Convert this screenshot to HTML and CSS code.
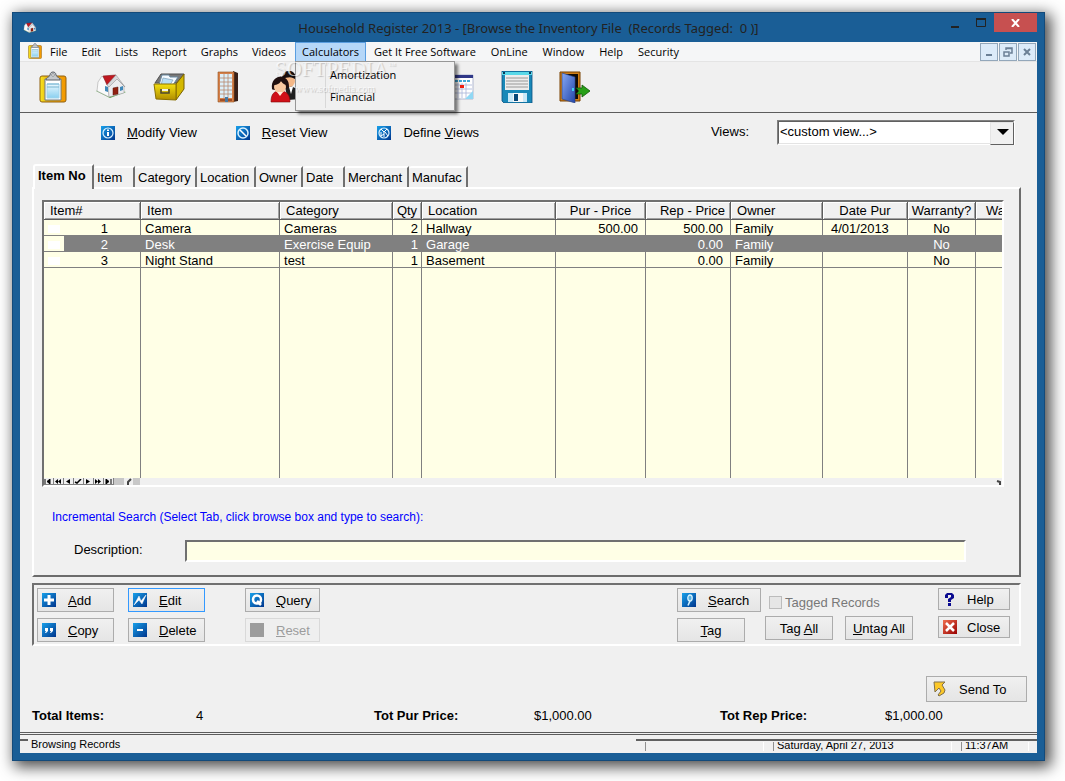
FILE: index.html
```html
<!DOCTYPE html>
<html lang="en">
<head>
    <meta charset="UTF-8">
    <meta name="viewport" content="width=device-width, initial-scale=1.0">
    <title>Household Register 2013</title>
    <link rel="stylesheet" href="styles.css">
</head>
<body>
    <!-- Shared icon drawings -->
    <svg class="defs" width="0" height="0" aria-hidden="true">
        <defs>
            <linearGradient id="blue" x1="0" y1="0" x2="1" y2="1">
                <stop offset="0" stop-color="#18a0ea"/>
                <stop offset="1" stop-color="#00358c"/>
            </linearGradient>
            <linearGradient id="red" x1="0" y1="0" x2="1" y2="1">
                <stop offset="0" stop-color="#f07050"/>
                <stop offset="1" stop-color="#980000"/>
            </linearGradient>
            <linearGradient id="gold" x1="0" y1="0" x2="0" y2="1">
                <stop offset="0" stop-color="#f4e010"/>
                <stop offset="1" stop-color="#b08c00"/>
            </linearGradient>
            <linearGradient id="board" x1="0" y1="0" x2="1" y2="0">
                <stop offset="0" stop-color="#f8e820"/>
                <stop offset=".3" stop-color="#e8b010"/>
                <stop offset="1" stop-color="#f49800"/>
            </linearGradient>
            <linearGradient id="door" x1="0" y1="0" x2="1" y2="1">
                <stop offset="0" stop-color="#86a8f4"/>
                <stop offset="1" stop-color="#2346a8"/>
            </linearGradient>
            <linearGradient id="glass" x1="0" y1="0" x2="0" y2="1">
                <stop offset="0" stop-color="#eaf8ff"/>
                <stop offset="1" stop-color="#8ad0f0"/>
            </linearGradient>
            <symbol id="clipboard" viewBox="0 0 32 32">
                <rect x="3" y="5" width="26" height="26" rx="2" fill="url(#board)" stroke="#906010"/>
                <path d="M8 8h16v21H8z" fill="#fff" stroke="#687888"/>
                <path d="M10 13h12v14H10z" fill="url(#glass)" stroke="#a0d4ec"/>
                <path d="M10 13h12M10 16h12" stroke="#78b4d0"/>
                <path d="M9 9c0-3 3-2 4-5 0-4 6-4 6 0 1 3 4 2 4 5z" fill="#c4c8cc" stroke="#60646a"/>
                <circle cx="16" cy="4" r="1.3" fill="#fff" stroke="#60646a" stroke-width=".6"/>
            </symbol>
            <symbol id="house" viewBox="0 0 32 32">
                <path d="M1 20l7-3 23 4-16 6z" fill="#58a048"/>
                <path d="M3 11l4-6 7 8v13L2 20z" fill="#fafafa" stroke="#a8a8a8" stroke-width=".6"/>
                <path d="M13 15l9-8 7 8v7l-15 4z" fill="#ececf0" stroke="#a0a0a0" stroke-width=".6"/>
                <path d="M8 5l13-1-9 10z" fill="#c01820" stroke="#801418" stroke-width=".6"/>
                <path d="M21 4l9 12-8-8-8 8-2-2z" fill="#d8d8dc" stroke="#888" stroke-width=".5"/>
                <path d="M18 17l5-1v7l-5 1z" fill="#902010" stroke="#581008" stroke-width=".5"/>
                <path d="M25 16l3-1v4l-3 1zM10 15l3 1v5l-3-1z" fill="#4088b8"/>
            </symbol>
            <symbol id="filebox" viewBox="0 0 32 32">
                <path d="M8 3h23l-6 9H2z" fill="#787878" stroke="#505050"/>
                <path d="M9 4h7l1 2h8l-5 8H6z" fill="#f4faff" stroke="#6888a0"/>
                <path d="M10 7l10 2-3 5H8z" fill="#b8def4" stroke="#80a0b8" stroke-width=".7"/>
                <path d="M31 3v15l-8 11V13z" fill="#d4b800" stroke="#786000"/>
                <path d="M1 13h22v16L3 28z" fill="url(#gold)" stroke="#8a7000"/>
                <path d="M8 18v4h8v-4" fill="none" stroke="#504a30" stroke-width="1.6"/>
                <path d="M9 18h6v2H9z" fill="#f4f4e8"/>
            </symbol>
            <symbol id="building" viewBox="0 0 32 32">
                <path d="M22 0l5 2v28l-5 1z" fill="#382018"/>
                <path d="M7 1h16v30H7z" fill="#d88048" stroke="#905020" stroke-width=".6"/>
                <path d="M9 3h12v24H9z" fill="#dcf0fa"/>
                <path d="M13 2v26M17 2v26M8 7h14M8 11h14M8 15h14M8 19h14M8 23h14" stroke="#b8886c" stroke-width=".8"/>
                <path d="M9 28h12v2H9z" fill="#a05028"/>
                <path d="M14 26h3v5h-3z" fill="#4878a0"/>
            </symbol>
            <symbol id="people" viewBox="0 0 32 32">
                <path d="M16 16c6-2 14 0 15 12l-12 1z" fill="#202020"/>
                <path d="M20 16l2 7 2-7z" fill="#fff"/>
                <circle cx="20" cy="10" r="6" fill="#f4b888"/>
                <path d="M13 8c0-11 15-11 14 1-4-4-8-3-14-1z" fill="#181010"/>
                <path d="M2 31c0-8 3-11 9-11s10 3 10 11z" fill="#d01018" stroke="#800808" stroke-width=".6"/>
                <path d="M3 18C1 2 21 2 20 16c0 3-17 4-17 2z" fill="#201010"/>
                <circle cx="11" cy="16" r="6" fill="#f8c8a0"/>
                <path d="M4 14c5 0 7-2 8-4 2 3 4 4 7 4-1-11-13-11-15 0z" fill="#201010"/>
                <path d="M8 21l3 4 3-4z" fill="#fff0e0"/>
            </symbol>
            <symbol id="calendar" viewBox="0 0 32 32">
                <path d="M2 4h28v24H2z" fill="#fff" stroke="#b0b8d0"/>
                <path d="M2 4h28v3H2z" fill="#303888"/>
                <path d="M4 10h24" stroke="#40a8d8" stroke-width="2" stroke-dasharray="3 1"/>
                <path d="M3 14h26M3 18h26M3 22h26M7 12v15M11 12v15M15 12v15M19 12v15M23 12v15" stroke="#a8b4d8" stroke-width=".8"/>
                <path d="M17 14h4v3h-4z" fill="#f02010"/>
                <path d="M30 20v8h-8z" fill="#90d8f4"/>
            </symbol>
            <symbol id="floppy" viewBox="0 0 32 32">
                <path d="M1 0h30v32H3l-2-2z" fill="#1888b8" stroke="#0a5080" stroke-width=".8"/>
                <path d="M1 1h30v3H1z" fill="#58d8e8"/>
                <path d="M4 4h24v15H4z" fill="#ececec"/>
                <path d="M5 7h22M5 10h22M5 13h22M5 16h22" stroke="#989898"/>
                <path d="M7 22h19v9H7z" fill="#c8e8f8"/>
                <path d="M12 22h10v9H12z" fill="#f8f8f8"/>
                <path d="M13 23h4v7h-4z" fill="#084878"/>
                <path d="M2 1h2v2H2zM28 1h2v2h-2z" fill="#083858"/>
            </symbol>
            <symbol id="exit" viewBox="0 0 32 32">
                <path d="M1 1h20v29H1z" fill="#d08018" stroke="#784000"/>
                <path d="M4 3h15v25H4z" fill="#100c08"/>
                <path d="M3 2l13 4v26L3 28z" fill="url(#door)" stroke="#284080" stroke-width=".6"/>
                <path d="M14 17v3" stroke="#40d0f0" stroke-width="2"/>
                <path d="M17 17h6v-3l8 6-8 6v-3h-6l3-3z" fill="#28a018" stroke="#105808" stroke-width=".8"/>
            </symbol>
        </defs>
    </svg>

    <div class="window">
        <header class="title-bar">
            <svg class="app-icon" viewBox="0 0 32 32"><use href="#house"/></svg>
            <h1>Household Register 2013 - [Browse the Inventory File&nbsp; (Records Tagged:&nbsp; 0 )]</h1>
            <div class="window-controls">
                <button aria-label="Minimize"><svg width="10" height="10"><path d="M1 9h8" stroke="#222" stroke-width="2"/></svg></button>
                <button aria-label="Maximize"><svg width="10" height="10"><path d="M.5 1.5h9v7h-9z" fill="none" stroke="#222"/><path d="M0 1h10" stroke="#222" stroke-width="2"/></svg></button>
                <button class="close" aria-label="Close window"><svg width="9" height="8"><path d="M1 0l7 8M8 0L1 8" stroke="#fff" stroke-width="2"/></svg></button>
            </div>
        </header>

        <main class="client">
            <nav class="menu-bar">
                <svg class="menu-icon" viewBox="0 0 32 32"><use href="#clipboard"/></svg>
                <button>File</button>
                <button>Edit</button>
                <button>Lists</button>
                <button>Report</button>
                <button>Graphs</button>
                <button>Videos</button>
                <div class="menu-open">
                    <button class="active">Calculators</button>
                    <div class="dropdown">
                        <div class="watermark">
                            <strong>SOFTPEDIA<sup>™</sup></strong>
                            <span>www.softpedia.com</span>
                        </div>
                        <button>Amortization</button>
                        <button>Financial</button>
                    </div>
                </div>
                <button>Get It Free Software</button>
                <button>OnLine</button>
                <button>Window</button>
                <button>Help</button>
                <button>Security</button>
                <div class="mdi-controls">
                    <button aria-label="Minimize child"><svg width="10" height="10"><path d="M2 8h6" stroke="#6b8096" stroke-width="2"/></svg></button>
                    <button aria-label="Restore child"><svg width="10" height="10"><path d="M3 3V1h6v5H7M3 1.500h6" fill="none" stroke="#6b8096" stroke-width="1.500"/><path d="M1 5h5v4H1z" fill="none" stroke="#6b8096" stroke-width="1.500"/></svg></button>
                    <button aria-label="Close child"><svg width="10" height="10"><path d="M2 2l6 6M8 2L2 8" stroke="#6b8096" stroke-width="2"/></svg></button>
                </div>
            </nav>

            <div class="toolbar">
                <button aria-label="Inventory"><svg viewBox="0 0 32 32"><use href="#clipboard"/></svg></button>
                <button aria-label="Home"><svg viewBox="0 0 32 32"><use href="#house"/></svg></button>
                <button aria-label="Files"><svg viewBox="0 0 32 32"><use href="#filebox"/></svg></button>
                <button aria-label="Locations"><svg viewBox="0 0 32 32"><use href="#building"/></svg></button>
                <button aria-label="Owners"><svg viewBox="0 0 32 32"><use href="#people"/></svg></button>
                <button class="after-space" aria-label="Calendar"><svg viewBox="0 0 32 32"><use href="#calendar"/></svg></button>
                <button aria-label="Save"><svg viewBox="0 0 32 32"><use href="#floppy"/></svg></button>
                <button aria-label="Exit"><svg viewBox="0 0 32 32"><use href="#exit"/></svg></button>
            </div>

            <div class="views-row">
                <button class="view-button">
                    <svg width="14" height="14"><rect width="14" height="14" fill="url(#blue)"/><circle cx="7" cy="7" r="5" fill="none" stroke="#d8f0ff" stroke-width="1.200"/><path d="M7 6v4M7 3.500v1.500" fill="none" stroke="#fff" stroke-width="2"/></svg>
                    <span><u>M</u>odify View</span>
                </button>
                <button class="view-button">
                    <svg width="14" height="14"><rect width="14" height="14" fill="url(#blue)"/><circle cx="7" cy="7" r="5" fill="none" stroke="#d8f0ff" stroke-width="1.500"/><path d="M4 4l6 6" stroke="#fff" stroke-width="1.500"/></svg>
                    <span><u>R</u>eset View</span>
                </button>
                <button class="view-button">
                    <svg width="14" height="14"><rect width="14" height="14" fill="url(#blue)"/><circle cx="7" cy="7" r="5" fill="none" stroke="#d8f0ff" stroke-width="1.200"/><path d="M4 3l3 3v5M10 3L7 6M8 6l3 4M4 6v4l3-2" fill="none" stroke="#fff"/></svg>
                    <span>Define <u>V</u>iews</span>
                </button>
                <label class="views-label" for="views">Views:</label>
                <div class="select-box">
                    <select id="views"><option>&lt;custom view...&gt;</option></select>
                </div>
            </div>

            <div class="tabs" role="tablist">
                <button class="selected" role="tab">Item No</button>
                <button role="tab">Item</button>
                <button role="tab">Category</button>
                <button role="tab">Location</button>
                <button role="tab">Owner</button>
                <button role="tab">Date</button>
                <button role="tab">Merchant</button>
                <button role="tab">Manufac</button>
            </div>

            <section class="tab-panel">
                <div class="browse">
                    <div class="browse-view">
                        <table>
                            <colgroup>
                                <col class="c-mark"><col class="c-no"><col class="c-item"><col class="c-category"><col class="c-qty"><col class="c-location"><col class="c-pur"><col class="c-rep"><col class="c-owner"><col class="c-date"><col class="c-warranty"><col class="c-expires">
                            </colgroup>
                            <thead>
                                <tr>
                                    <th colspan="2">Item#</th>
                                    <th>Item</th>
                                    <th>Category</th>
                                    <th class="center">Qty</th>
                                    <th>Location</th>
                                    <th class="center">Pur - Price</th>
                                    <th class="right">Rep - Price</th>
                                    <th>Owner</th>
                                    <th class="center">Date Pur</th>
                                    <th class="center">Warranty?</th>
                                    <th class="last">Warranty Exp</th>
                                </tr>
                            </thead>
                            <tbody>
                                <tr>
                                    <td class="mark"></td><td class="no">1</td><td>Camera</td><td>Cameras</td><td class="right">2</td><td>Hallway</td><td class="money">500.00</td><td class="money">500.00</td><td>Family</td><td class="date">4/01/2013</td><td class="center">No</td><td></td>
                                </tr>
                                <tr class="current">
                                    <td class="mark"></td><td class="no">2</td><td>Desk</td><td>Exercise Equip</td><td class="right">1</td><td>Garage</td><td></td><td class="money">0.00</td><td>Family</td><td></td><td class="center">No</td><td></td>
                                </tr>
                                <tr>
                                    <td class="mark"></td><td class="no">3</td><td>Night Stand</td><td>test</td><td class="right">1</td><td>Basement</td><td></td><td class="money">0.00</td><td>Family</td><td></td><td class="center">No</td><td></td>
                                </tr>
                                <tr class="filler">
                                    <td class="mark"></td><td></td><td></td><td></td><td></td><td></td><td></td><td></td><td></td><td></td><td></td><td></td>
                                </tr>
                            </tbody>
                        </table>
                    </div>
                    <div class="vcr">
                        <button aria-label="First"><svg width="8" height="5"><path d="M1 0v5M6 0v5L3 2.500z" fill="#000" stroke="#000"/></svg></button>
                        <button aria-label="Page up"><svg width="8" height="5"><path d="M4 0v5L1 2.500zM7 0v5L4 2.500z"/></svg></button>
                        <button aria-label="Previous"><svg width="8" height="5"><path d="M6 0v5L2 2.500z"/></svg></button>
                        <button aria-label="Locate"><svg width="8" height="5"><path d="M1 3l2 1 4-4" fill="none" stroke="#000" stroke-width="1.500"/></svg></button>
                        <button aria-label="Next"><svg width="8" height="5"><path d="M2 0v5l4-2.500z"/></svg></button>
                        <button aria-label="Page down"><svg width="8" height="5"><path d="M1 0v5l3-2.500zM4 0v5l3-2.500z"/></svg></button>
                        <button aria-label="Last"><svg width="8" height="5"><path d="M7 0v5M2 0v5l3-2.500z" fill="#000" stroke="#000"/></svg></button>
                        <span class="vcr-end"></span>
                        <span class="scroll-thumb"><svg width="7" height="7"><path d="M5 1L2 4v3" fill="none" stroke="#444" stroke-width="2"/></svg></span>
                        <svg class="scroll-end" width="6" height="7"><path d="M1 3l3 1v3" fill="none" stroke="#444" stroke-width="2"/></svg>
                    </div>
                </div>
                <p class="search-hint">Incremental Search (Select Tab, click browse box and type to search):</p>
                <div class="search-row">
                    <label for="description">Description:</label>
                    <input type="text" id="description">
                </div>
            </section>

            <section class="actions">
                <div class="column record">
                    <button class="button"><svg width="14" height="14"><rect width="14" height="14" fill="url(#blue)"/><path d="M7 2v10M2 7h10" stroke="#fff" stroke-width="3"/></svg><span><u>A</u>dd</span></button>
                    <button class="button"><svg width="14" height="14"><rect width="14" height="14" fill="url(#blue)"/><path d="M3 5h3v3L4 10H3l1-2H3zM8 5h3v3l-2 2H8l1-2H8z" fill="#fff"/></svg><span><u>C</u>opy</span></button>
                </div>
                <div class="column record">
                    <button class="button default"><svg width="14" height="14"><rect width="14" height="14" fill="url(#blue)"/><path d="M1 12l5-9 2 5 5-6-4 9-3-4z" fill="#fff" stroke="#fff" stroke-width=".5"/></svg><span><u>E</u>dit</span></button>
                    <button class="button"><svg width="14" height="14"><rect width="14" height="14" fill="url(#blue)"/><path d="M4 7h6" stroke="#fff" stroke-width="2"/></svg><span><u>D</u>elete</span></button>
                </div>
                <div class="column query">
                    <button class="button"><svg width="14" height="14"><rect width="14" height="14" fill="url(#blue)"/><circle cx="7" cy="6.500" r="4" fill="none" stroke="#fff" stroke-width="2.500"/><path d="M7 8l4 4" stroke="#fff" stroke-width="2.500"/></svg><span><u>Q</u>uery</span></button>
                    <button class="button" disabled><svg width="14" height="14"><rect width="14" height="14" fill="#9c9c9c"/></svg><span><u>R</u>eset</span></button>
                </div>
                <div class="column find">
                    <button class="button"><svg width="14" height="14"><rect width="14" height="14" fill="url(#blue)"/><path d="M8 8l-2 4.500" stroke="#d8f4ff" stroke-width="1.600"/><ellipse cx="8" cy="5" rx="2.200" ry="3" fill="#58b0e0" stroke="#d8f4ff" stroke-width="1.300"/></svg><span><u>S</u>earch</span></button>
                    <button class="button plain tag"><span><u>T</u>ag</span></button>
                </div>
                <div class="column tagging">
                    <label class="tagged"><input type="checkbox" disabled>Tagged Records</label>
                    <div class="pair">
                        <button class="button plain"><span>Tag <u>A</u>ll</span></button>
                        <button class="button plain"><span><u>U</u>ntag All</span></button>
                    </div>
                </div>
                <div class="column closing">
                    <button class="button"><svg width="14" height="14"><path d="M2 3l2-2h5l2 2v3L8 8v2H5V7l3-2V3H5v3H2z" fill="#0a0a90"/><path d="M5 11h3v3H5z" fill="#0a0a90"/></svg><span>Help</span></button>
                    <button class="button"><svg width="14" height="14"><rect width="14" height="14" fill="url(#red)"/><path d="M3 3l8 8M11 3l-8 8" stroke="#fff" stroke-width="2.500"/></svg><span>Close</span></button>
                </div>
            </section>

            <div class="send-row">
                <button class="button"><svg width="14" height="16"><path d="M1 1h11L9 4l3 5-1 3-5 3-1-1 3-4-2-3-4 4z" fill="#fcc828" stroke="#80704c"/></svg><span>Send To</span></button>
            </div>

            <div class="totals">
                <strong>Total Items:</strong><span>4</span>
                <strong>Tot Pur Price:</strong><span>$1,000.00</span>
                <strong>Tot Rep Price:</strong><span>$1,000.00</span>
            </div>

            <footer class="status-bar">
                <div class="status-message">Browsing Records</div>
                <div class="status-panes">
                    <div class="pane"></div>
                    <div class="pane today"><span>Saturday, April 27, 2013</span></div>
                    <div class="pane clock"><span>11:37AM</span></div>
                </div>
            </footer>
        </main>
    </div>
</body>
</html>
```
FILE: styles.css
```css
* {
    box-sizing: border-box;
}

body {
    margin: 0;
    padding: 12px 20px 20px 12px;
    background-color: #fff;
    font-family: "Liberation Sans", Arial, sans-serif;
    font-size: 13px;
    line-height: 16px;
    color: #000;
}

button {
    margin: 0;
    padding: 0;
    border: none;
    background: none;
    font: inherit;
    color: inherit;
}

svg {
    display: block;
    flex: none;
}

.defs {
    position: absolute;
}

.window {
    padding: 0 7px 7px;
    border: 1px solid #134a7a;
    background-color: #1a5e96;
    box-shadow: 4px 4px 14px 2px rgba(0, 0, 0, 0.7);
}

/* Title bar */
.title-bar {
    display: grid;
    grid-template-columns: 1fr auto 1fr;
    height: 29px;
    align-items: center;
}

.title-bar h1 {
    margin: 0;
    font-family: "Noto Sans", "Open Sans", sans-serif;
    font-size: 13px;
    font-weight: normal;
    color: #222;
}

.app-icon {
    width: 14px;
    height: 14px;
    margin-left: 3px;
}

.window-controls {
    display: flex;
    justify-content: flex-end;
    align-self: start;
}

.window-controls button {
    width: 26px;
    height: 19px;
    display: flex;
    align-items: center;
    justify-content: center;
}

.window-controls .close {
    width: 43px;
    background-color: #c75050;
}

.client {
    background-color: #f0f0f0;
}

/* Menu bar */
.menu-bar {
    display: flex;
    height: 20px;
    background-color: #f5f6f7;
    border-bottom: 1px solid #e4e4e4;
    font-family: "Open Sans", "Noto Sans", sans-serif;
    font-size: 11px;
}

.menu-icon {
    width: 16px;
    height: 16px;
    margin: 1px 0 0 7px;
}

.menu-bar button {
    padding: 0 7px;
    height: 19px;
}

.menu-open {
    position: relative;
    margin-left: 2px;
}

.menu-open ~ button {
    padding-left: 8px;
}

.menu-bar .active {
    height: 20px;
    background-color: #b5d7f8;
    border: 1px solid #5a9ee0;
    padding: 0 6px;
}

.dropdown {
    position: absolute;
    top: 19px;
    left: 0;
    width: 160px;
    height: 50px;
    padding: 2px;
    background-color: #f0f0f0;
    border: 1px solid #979797;
    box-shadow: 3px 3px 3px rgba(0, 0, 0, 0.5);
    z-index: 2;
}

.dropdown::before {
    content: '';
    position: absolute;
    top: 2px;
    bottom: 2px;
    left: 29px;
    border-left: 1px solid #d8d8d8;
}

.dropdown button {
    position: relative;
    display: block;
    width: 100%;
    height: 22px;
    padding-left: 32px;
    text-align: left;
}

.watermark {
    position: absolute;
    top: -5px;
    left: -21px;
    color: rgba(255, 255, 255, 0.7);
    text-shadow: 1px 1px 1px rgba(0, 0, 0, 0.2);
    font-family: "Liberation Serif", serif;
    font-size: 10px;
    pointer-events: none;
}

.watermark strong {
    display: block;
    font-size: 21px;
    font-weight: normal;
    line-height: 24px;
}

.watermark sup {
    font-size: 8px;
    line-height: 8px;
}

.watermark span {
    margin-left: 20px;
}

.mdi-controls {
    display: flex;
    gap: 1px;
    margin: 1px 1px 0 auto;
}

.mdi-controls button {
    width: 18px;
    height: 18px;
    padding: 3px;
    background-color: #dcebf9;
    border: 1px solid #93a7ba;
}

/* Toolbar */
.toolbar {
    display: flex;
    gap: 26px;
    height: 51px;
    padding: 9px 17px;
    border-bottom: 1px solid #5c5c5c;
}

.toolbar button,
.toolbar svg {
    width: 32px;
    height: 32px;
}

.toolbar .after-space {
    margin-left: 116px;
}

/* Views row */
.views-row {
    display: flex;
    align-items: center;
    height: 51px;
    padding: 0 22px 13px 81px;
}

.view-button {
    display: flex;
    gap: 12px;
    align-items: center;
    margin-right: 39px;
    padding-top: 1px;
}

.view-button:nth-child(2) {
    margin-right: 50px;
}

.views-label {
    margin: 0 28px 0 auto;
}

.select-box {
    position: relative;
    width: 238px;
    height: 25px;
    border: 1px solid;
    border-color: #808080 #fff #fff #808080;
}

.select-box::before {
    content: '';
    position: absolute;
    top: 1px;
    right: 0;
    width: 22px;
    height: 21px;
    background-color: #f0f0f0;
    border: 1px solid;
    border-color: #e4e4e4 #606060 #606060 #e4e4e4;
    pointer-events: none;
}

.select-box::after {
    content: '';
    position: absolute;
    top: 8px;
    right: 5px;
    border: 6px solid transparent;
    border-top-color: #000;
    border-bottom: none;
    pointer-events: none;
}

.select-box select {
    width: 100%;
    height: 23px;
    padding: 0 0 0 1px;
    appearance: none;
    border: 1px solid;
    border-color: #606060 #e4e4e4 #e4e4e4 #606060;
    border-radius: 0;
    background-color: #fff;
    font: inherit;
    color: inherit;
}

/* Tabs */
.tabs {
    display: grid;
    grid-template-columns: 61px 41px 62px 59px 47px 42px 64px 59px;
    align-items: end;
    height: 23px;
    margin-left: 13px;
}

.tabs button {
    height: 21px;
    padding-left: 3px;
    text-align: left;
    border-top: 2px solid #fff;
    border-right: 2px solid #707070;
    border-top-left-radius: 3px;
}

.tabs .selected {
    position: relative;
    height: 25px;
    padding: 0 0 4px 3px;
    margin-bottom: -2px;
    background-color: #f0f0f0;
    border-left: 2px solid #fff;
    font-weight: bold;
}

.tab-panel {
    margin: 0 16px 0 12px;
    padding: 11px 15px 13px 8px;
    border: 2px solid;
    border-color: #fff #6c6c6c #6c6c6c #fff;
}

/* Browse table */
.browse {
    border: 2px solid;
    border-color: #707070 #fff #fff #707070;
}

.browse-view {
    height: 276px;
    overflow: hidden;
    background-color: #ffffe6;
}

.browse table {
    width: 1060px;
    height: 276px;
    table-layout: fixed;
    border-collapse: separate;
    border-spacing: 0;
}

.c-mark { width: 20px; }
.c-no { width: 77px; }
.c-item { width: 139px; }
.c-category { width: 113px; }
.c-qty { width: 29px; }
.c-location { width: 134px; }
.c-pur { width: 90px; }
.c-rep { width: 85px; }
.c-owner { width: 92px; }
.c-date { width: 85px; }
.c-warranty { width: 68px; }

.browse th {
    height: 18px;
    padding: 0 5px 0 6px;
    background-color: #f0f0f0;
    border-right: 1px solid #5c5c5c;
    border-bottom: 1px solid #5c5c5c;
    box-shadow: inset 1px 1px #fff, inset -1px -1px #a0a0a0;
    font-weight: normal;
    line-height: 16px;
    text-align: left;
    white-space: nowrap;
}

.browse th.last {
    padding-left: 10px;
}

.browse td {
    height: 16px;
    padding: 2px 3px 0 4px;
    border-right: 1px solid #808080;
    border-bottom: 1px solid #808080;
    line-height: 13px;
    white-space: nowrap;
}

.browse .current td {
    background-color: #808080;
    color: #fff;
}

.browse .mark,
.browse .current .mark {
    border-right: none;
    background: linear-gradient(#fff, #fff) 4px 5px / 12px 8px no-repeat #ffffe6;
}

.browse .filler td {
    height: auto;
    border-bottom: none;
    background: none;
}

.browse .center {
    padding-left: 0;
    padding-right: 0;
    text-align: center;
}

.browse .right {
    text-align: right;
}

.browse .no {
    padding-right: 32px;
    text-align: right;
}

.browse .money {
    padding-right: 7px;
    text-align: right;
}

.browse .date {
    padding-left: 8px;
}

.vcr {
    display: flex;
    height: 7px;
}

.vcr button {
    width: 10px;
    height: 7px;
    padding: 1px 0;
    border-right: 1px solid #808080;
    border-bottom: 1px solid #808080;
}

.vcr-end {
    width: 10px;
    background-color: #c8c8c8;
}

.scroll-thumb {
    width: 14px;
    margin-left: 2px;
    background: linear-gradient(90deg, #f0f0f0 50%, #c8c8c8 50%);
}

.scroll-end {
    margin-left: auto;
}

.search-hint {
    margin: 22px 0 0 10px;
    font-size: 12px;
    color: #0000ff;
}

.search-row {
    display: flex;
    align-items: center;
    margin: 15px 38px 0 32px;
}

.search-row label {
    width: 111px;
    padding-bottom: 2px;
}

.search-row input {
    flex: 1;
    height: 22px;
    border: 2px solid;
    border-color: #707070 #fff #fff #707070;
    background-color: #ffffe6;
    font: inherit;
}

/* Action buttons */
.actions {
    display: flex;
    margin: 6px 16px 0 12px;
    padding: 3px 9px 2px 3px;
    border: 2px solid;
    border-color: #707070 #fff #fff #707070;
}

.column {
    display: flex;
    flex-direction: column;
    gap: 6px;
}

.button {
    display: flex;
    align-items: center;
    gap: 12px;
    height: 24px;
    padding: 0 4px;
    border: 1px solid #acacac;
    background: linear-gradient(#f0f0f0, #e5e5e5);
}

.button span {
    padding-top: 2px;
}

.button.plain {
    width: 68px;
    justify-content: center;
    padding: 0;
}

.button.default {
    border-color: #3399ff;
}

.button:disabled {
    border-color: #d9d9d9;
    background: #efefef;
    color: #9c9c9c;
}

.record {
    width: 77px;
    margin-right: 14px;
}

.query {
    width: 75px;
    margin-left: 26px;
}

.find {
    width: 84px;
    margin-left: auto;
}

.tagging {
    margin: 0 25px 0 4px;
}

.tagged {
    display: flex;
    align-items: center;
    gap: 3px;
    height: 22px;
    padding: 7px 0 0 4px;
    color: #787878;
}

.tagged input {
    appearance: none;
    width: 13px;
    height: 13px;
    margin: 0;
    border: 1px solid #bcbcbc;
    background-color: #e6e6e6;
}

.pair {
    display: flex;
    gap: 12px;
}

.closing {
    width: 72px;
}

.closing .button {
    height: 22px;
    gap: 10px;
}

.send-row {
    display: flex;
    justify-content: flex-end;
    margin: 30px 10px 0 0;
}

.send-row .button {
    width: 101px;
    height: 26px;
    padding-left: 6px;
}

.totals {
    display: grid;
    grid-template-columns: 164fr 178fr 160fr 186fr 165fr 152fr;
    margin: 6px 0 8px;
    padding-left: 12px;
}

/* Status bar */
.status-bar {
    display: flex;
    justify-content: space-between;
    height: 21px;
    padding-top: 3px;
    border-top: 3px double #5c5c5c;
    font-size: 11px;
    line-height: 12px;
}

.status-message {
    padding-left: 11px;
    background: linear-gradient(#606060, #606060) 0 1px / 8px 2px no-repeat;
}

.status-panes {
    display: flex;
    gap: 9px;
    width: 401px;
    height: 12px;
    margin-top: 1px;
    padding: 0 8px 0 9px;
    border-top: 2px solid #606060;
}

.pane {
    flex: 1;
    height: 9px;
    margin-top: 1px;
    overflow: hidden;
    padding-left: 3px;
    border-left: 1px solid #909090;
    border-right: 1px solid #fff;
}

.pane span {
    display: block;
    margin-top: -3px;
}

.pane.today {
    flex: none;
    width: 179px;
}

.pane.clock {
    flex: none;
    width: 68px;
}
```
